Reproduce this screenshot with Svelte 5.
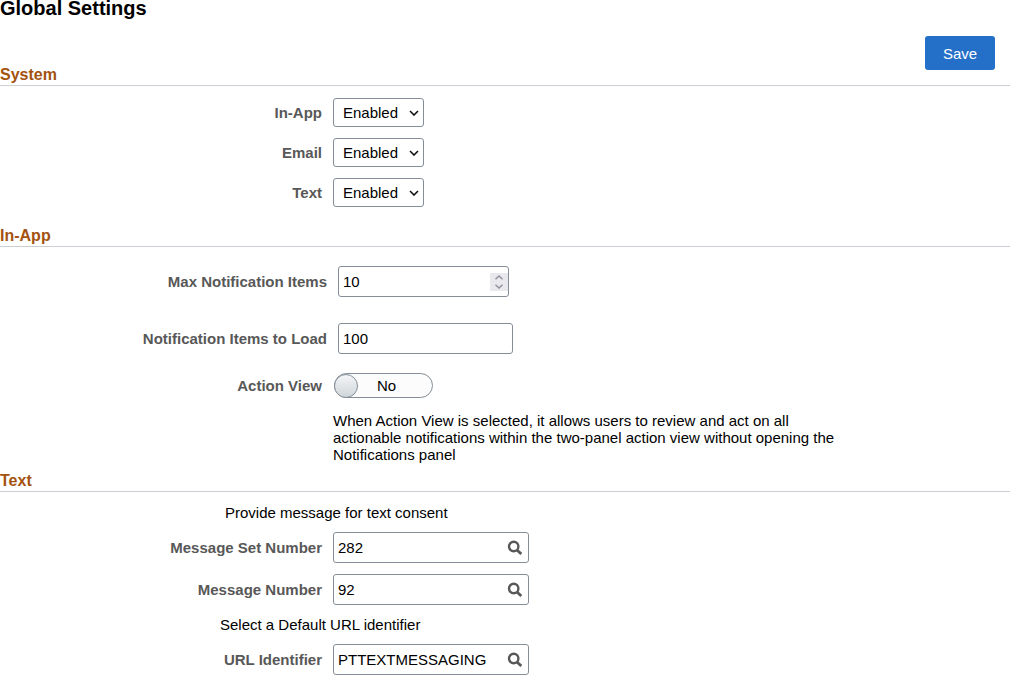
<script lang="ts">
  const channels = $state([
    { id: "in-app", label: "In-App", value: "Enabled" },
    { id: "email", label: "Email", value: "Enabled" },
    { id: "text", label: "Text", value: "Enabled" },
  ]);

  let maxItems = $state(10);
  let itemsToLoad = $state("100");
  let actionView = $state(false);
  let messageSet = $state("282");
  let messageNumber = $state("92");
  let urlId = $state("PTTEXTMESSAGING");

  function step(by: number) {
    maxItems = Math.max(0, maxItems + by);
  }
</script>

{#snippet lookup(label: string)}
  <button type="button" class="lookup-btn" aria-label={label}>
    <svg width="16" height="16" viewBox="0 0 16 16" aria-hidden="true">
      <circle cx="6.7" cy="6.5" r="4.7" fill="none" stroke="#585858" stroke-width="2.4" />
      <path d="M10.2 10.2 L14.3 14.1" stroke="#585858" stroke-width="2.8" />
    </svg>
  </button>
{/snippet}

<main>
  <h1>Global Settings</h1>

  <div class="section-head first">
    <h2>System</h2>
    <button type="button" class="save">Save</button>
  </div>
  <section class="system">
    {#each channels as channel (channel.id)}
      <div class="row">
        <label for={channel.id}>{channel.label}</label>
        <div class="select">
          <select id={channel.id} bind:value={channel.value}>
            <option>Enabled</option>
            <option>Disabled</option>
          </select>
          <svg width="10" height="6" viewBox="0 0 10 6" aria-hidden="true">
            <path d="M1 1 L5 5 L9 1" fill="none" stroke="#111" stroke-width="1.6" />
          </svg>
        </div>
      </div>
    {/each}
  </section>

  <div class="section-head">
    <h2>In-App</h2>
  </div>
  <section class="in-app">
    <div class="row wide spaced">
      <label for="max-items">Max Notification Items</label>
      <div class="box number">
        <input id="max-items" type="number" bind:value={maxItems} />
        <div class="spinner">
          <button type="button" aria-label="Increase" onclick={() => step(1)}>
            <svg width="8" height="5" viewBox="0 0 8 5"><path d="M0.5 4.3 L4 1 L7.5 4.3" /></svg>
          </button>
          <button type="button" aria-label="Decrease" onclick={() => step(-1)}>
            <svg width="8" height="5" viewBox="0 0 8 5"><path d="M0.5 0.7 L4 4 L7.5 0.7" /></svg>
          </button>
        </div>
      </div>
    </div>
    <div class="row wide">
      <label for="load-items">Notification Items to Load</label>
      <div class="box load">
        <input id="load-items" type="text" bind:value={itemsToLoad} />
      </div>
    </div>
    <div class="row toggle-row">
      <label for="action-view">Action View</label>
      <button
        id="action-view"
        type="button"
        role="switch"
        class="toggle"
        class:on={actionView}
        aria-checked={actionView}
        onclick={() => (actionView = !actionView)}
      >
        <span class="knob"></span>
        <span class="state">{actionView ? "Yes" : "No"}</span>
      </button>
    </div>
    <p class="help">
      When Action View is selected, it allows users to review and act on all actionable
      notifications within the two-panel action view without opening the Notifications panel
    </p>
  </section>

  <div class="section-head">
    <h2>Text</h2>
  </div>
  <section class="text">
    <p class="note consent">Provide message for text consent</p>
    <div class="row">
      <label for="message-set">Message Set Number</label>
      <div class="box lookup">
        <input id="message-set" type="text" bind:value={messageSet} />
        {@render lookup("Look up Message Set Number")}
      </div>
    </div>
    <div class="row">
      <label for="message-number">Message Number</label>
      <div class="box lookup">
        <input id="message-number" type="text" bind:value={messageNumber} />
        {@render lookup("Look up Message Number")}
      </div>
    </div>
    <p class="note">Select a Default URL identifier</p>
    <div class="row">
      <label for="url-id">URL Identifier</label>
      <div class="box lookup">
        <input id="url-id" type="text" bind:value={urlId} />
        {@render lookup("Look up URL Identifier")}
      </div>
    </div>
  </section>
</main>

<style>
  :global(body) {
    margin: 0;
    background: #fff;
  }

  main {
    font-family: "Liberation Sans", Arial, sans-serif;
    font-size: 15px;
    line-height: 17px;
    color: #000;
  }

  h1 {
    margin: 0;
    font-size: 20px;
    line-height: 16px;
  }

  h2 {
    margin: 0;
    padding-top: 1px;
    font-size: 16px;
    line-height: 20px;
    color: #a3520f;
  }

  p {
    margin: 0;
  }

  button,
  input,
  select {
    font: inherit;
    color: inherit;
  }

  .section-head {
    display: flex;
    align-items: flex-end;
    justify-content: space-between;
    border-bottom: 1px solid #ccd0d4;
  }

  .section-head.first {
    padding-top: 20px;
  }

  .save {
    width: 70px;
    height: 34px;
    margin: 0 15px 15px 0;
    padding: 0;
    border: 0;
    border-radius: 3px;
    background: #2470c8;
    color: #fff;
  }

  .row {
    display: grid;
    grid-template-columns: 322px auto;
    justify-content: start;
    align-items: center;
    column-gap: 11px;
  }

  .row.wide {
    grid-template-columns: 327px auto;
  }

  .row.spaced {
    margin-bottom: 26px;
  }

  .row label {
    text-align: right;
    font-weight: bold;
    color: #585858;
  }

  .system {
    display: flex;
    flex-direction: column;
    gap: 11px;
    padding: 12px 0 18px;
  }

  .select {
    display: grid;
    align-items: center;
  }

  .select select,
  .select svg {
    grid-area: 1 / 1;
  }

  .select svg {
    justify-self: end;
    margin-right: 5px;
    pointer-events: none;
  }

  select {
    appearance: none;
    width: 91px;
    height: 29px;
    padding: 0 9px;
    border: 1px solid #848e98;
    border-radius: 3px;
    background: #fff;
  }

  .in-app {
    padding: 19px 0 7px;
  }

  .box {
    box-sizing: border-box;
    display: flex;
    align-items: center;
    height: 31px;
    border: 1px solid #848e98;
    border-radius: 3px;
    background: #fff;
  }

  .box input {
    flex: 1;
    min-width: 0;
    padding: 0 4px;
    border: 0;
    outline: 0;
    background: none;
    appearance: textfield;
  }

  .box input::-webkit-inner-spin-button {
    appearance: none;
    margin: 0;
  }

  .number {
    width: 171px;
  }

  .load {
    width: 175px;
  }

  .spinner {
    display: flex;
    flex-direction: column;
    background: #e9e9ed;
  }

  .spinner button {
    display: grid;
    place-items: center;
    width: 18px;
    height: 9px;
    padding: 0;
    border: 0;
    background: none;
  }

  .spinner path {
    fill: none;
    stroke: #8f8f9d;
    stroke-width: 1.4;
  }

  .toggle-row {
    padding: 19px 0 14px;
  }

  .toggle {
    display: flex;
    align-items: center;
    width: 99px;
    height: 25px;
    margin-left: 1px;
    padding: 0;
    border: 1px solid #848e98;
    border-radius: 13px;
    background: #fcfcfc;
  }

  .toggle.on {
    flex-direction: row-reverse;
  }

  .knob {
    box-sizing: border-box;
    width: 24px;
    height: 24px;
    margin: 0 -1px;
    border: 1px solid #848e98;
    border-radius: 50%;
    background: linear-gradient(#f4f5f6, #d0d6da);
  }

  .state {
    flex: 1;
    padding-right: 16px;
    text-align: center;
  }

  .help {
    max-width: 510px;
    margin-left: 333px;
  }

  .text {
    display: flex;
    flex-direction: column;
    gap: 11px;
    padding-top: 12px;
  }

  .note {
    margin-left: 220px;
  }

  .note.consent {
    margin-left: 225px;
  }

  .lookup {
    width: 196px;
  }

  .lookup-btn {
    display: grid;
    place-items: center;
    width: 26px;
    height: 28px;
    padding: 0;
    border: 0;
    background: none;
  }
</style>
